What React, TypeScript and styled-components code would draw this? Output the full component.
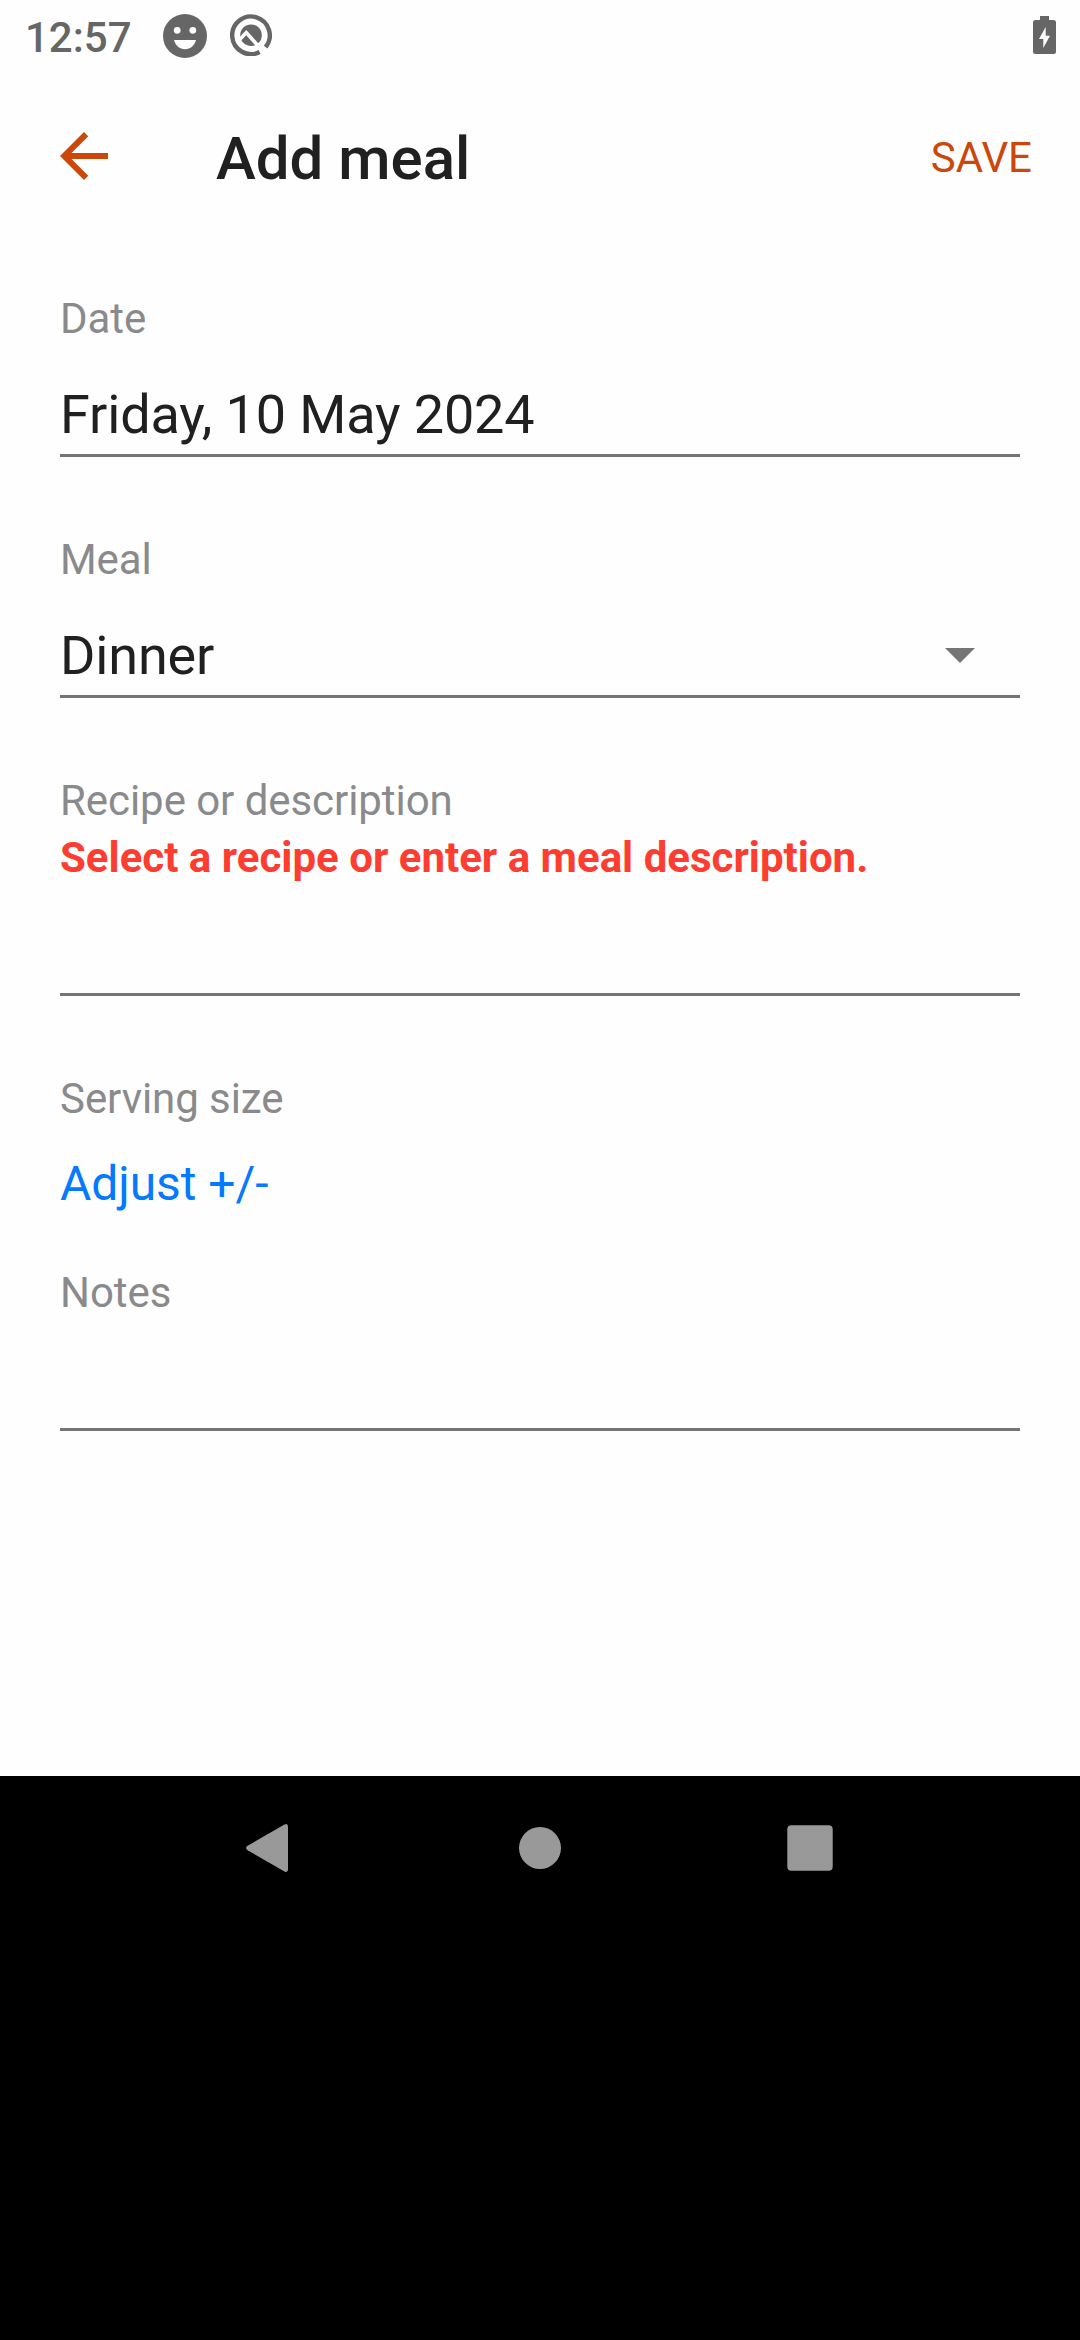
import React from 'react';
import styled, { createGlobalStyle } from 'styled-components';

const GlobalStyle = createGlobalStyle`
  * { box-sizing: border-box; }
  body { margin: 0; background: #000; }
`;

const Screen = styled.div`
  display: flex;
  flex-direction: column;
  width: 1080px;
  height: 2340px;
  background: #000;
  font-family: Roboto, sans-serif;
  overflow: hidden;
`;

const AppArea = styled.div`
  height: 1776px;
  background: #fefefe;
`;

const StatusBar = styled.header`
  display: flex;
  align-items: flex-start;
  height: 72px;
  padding: 13px 24px 0 25px;
  color: #666;
`;

const Clock = styled.span`
  width: 138px;
  font-size: 42px;
  line-height: 49px;
  font-weight: 500;
`;

const StatusIcon = styled.svg<{ $size: number }>`
  width: ${(p) => p.$size}px;
  height: ${(p) => p.$size}px;
  margin-top: 1px;
  margin-right: 23px;
`;

const Battery = styled.svg`
  width: 23px;
  height: 38px;
  margin: 3px 0 0 auto;
`;

const Toolbar = styled.div`
  display: flex;
  align-items: center;
  height: 168px;
  padding: 0 48px;
`;

const BackButton = styled.button`
  display: flex;
  padding: 0;
  border: 0;
  background: none;
  color: #cc470a;
`;

const Title = styled.h1`
  flex: 1;
  margin: 5px 0 0 96px;
  font-size: 60px;
  line-height: 71px;
  font-weight: 500;
  color: #202020;
`;

const SaveButton = styled.button`
  margin-top: 3px;
  padding: 0;
  border: 0;
  background: none;
  font: 400 42px/49px Roboto, sans-serif;
  color: #cc470a;
`;

const Form = styled.main`
  padding: 54px 60px 0;
`;

const Field = styled.section<{ $gap: number }>`
  margin-bottom: ${(p) => p.$gap}px;
`;

const Label = styled.div`
  font-size: 42px;
  line-height: 49px;
  letter-spacing: -0.06px;
  color: #8a8a8c;
`;

const ErrorText = styled.div`
  margin-top: 8px;
  font-size: 42px;
  line-height: 49px;
  font-weight: 700;
  color: #fc3d30;
`;

const Value = styled.div`
  display: flex;
  justify-content: space-between;
  height: 74px;
  margin-top: 40px;
  padding-right: 45px;
  border-bottom: 3px solid #757575;
  font-size: 54px;
  line-height: 63px;
  letter-spacing: -0.15px;
  color: #202020;
`;

const Caret = styled.svg`
  width: 30px;
  height: 15px;
  margin-top: 24px;
`;

const AdjustLink = styled.a`
  display: block;
  margin-top: 32px;
  font-size: 48px;
  line-height: 57px;
  letter-spacing: -0.06px;
  color: #057aff;
`;

const NavBar = styled.nav`
  display: flex;
  justify-content: center;
  gap: 198px;
  padding-top: 36px;
`;

const NavIcon = styled.svg`
  width: 72px;
  height: 72px;
  fill: #999;
`;

export default function App() {
  return (
    <>
      <GlobalStyle />
      <Screen>
        <AppArea>
          <StatusBar>
            <Clock>12:57</Clock>
            <StatusIcon $size={44} viewBox="0 0 44 44">
              <circle cx="22" cy="22" r="22" fill="#666" />
              <circle cx="14.2" cy="16.3" r="3.4" fill="#fefefe" />
              <circle cx="29.8" cy="16.3" r="3.4" fill="#fefefe" />
              <path d="M11 26H33C31.500 31.500 27.500 35.300 22 35.300S12.500 31.500 11 26Z" fill="#fefefe" />
            </StatusIcon>
            <StatusIcon $size={42} viewBox="0 0 42 42">
              <path d="M29.600 38A18.800 18.800 0 1 1 35.600 33.100" fill="none" stroke="#666" strokeWidth="4.400" />
              <circle cx="21" cy="21.200" r="10.800" fill="#666" />
              <path d="M8.500 26.800L16.300 18.600L33.500 38" fill="none" stroke="#fefefe" strokeWidth="3.600" />
            </StatusIcon>
            <Battery viewBox="0 0 23 38">
              <path d="M7 0H16V4H20.500A2.500 2.500 0 0 1 23 6.500V35.500A2.500 2.500 0 0 1 20.500 38H2.500A2.500 2.500 0 0 1 0 35.500V6.500A2.500 2.500 0 0 1 2.500 4H7Z" fill="#666" />
              <path d="M12.700 11V19.700H17L10.300 32V23H6Z" fill="#fefefe" />
            </Battery>
          </StatusBar>
          <Toolbar>
            <BackButton aria-label="Back">
              <svg width="72" height="72" viewBox="0 0 24 24">
                <path fill="currentColor" d="M20 11H7.830l5.590-5.590L12 4l-8 8 8 8 1.410-1.410L7.830 13H20v-2z" />
              </svg>
            </BackButton>
            <Title>Add meal</Title>
            <SaveButton>SAVE</SaveButton>
          </Toolbar>
          <Form>
            <Field $gap={78}>
              <Label>Date</Label>
              <Value>Friday, 10 May 2024</Value>
            </Field>
            <Field $gap={78}>
              <Label>Meal</Label>
              <Value>
                Dinner
                <Caret viewBox="0 0 30 15">
                  <path d="M0 0H30L15 15Z" fill="#757575" />
                </Caret>
              </Value>
            </Field>
            <Field $gap={78}>
              <Label>Recipe or description</Label>
              <ErrorText>Select a recipe or enter a meal description.</ErrorText>
              <Value />
            </Field>
            <Field $gap={56}>
              <Label>Serving size</Label>
              <AdjustLink>Adjust +/-</AdjustLink>
            </Field>
            <Field $gap={0}>
              <Label>Notes</Label>
              <Value />
            </Field>
          </Form>
        </AppArea>
        <NavBar>
          <NavIcon viewBox="0 0 72 72">
            <path d="M13.600 33.800L50.500 12.600Q54 10.800 54 14.800V57.200Q54 61.200 50.500 59.400L13.600 38.200Q10.400 36 13.600 33.800Z" />
          </NavIcon>
          <NavIcon viewBox="0 0 72 72">
            <circle cx="36" cy="36" r="21" />
          </NavIcon>
          <NavIcon viewBox="0 0 72 72">
            <rect x="13.300" y="13.200" width="45.400" height="45.500" rx="4" />
          </NavIcon>
        </NavBar>
      </Screen>
    </>
  );
}
